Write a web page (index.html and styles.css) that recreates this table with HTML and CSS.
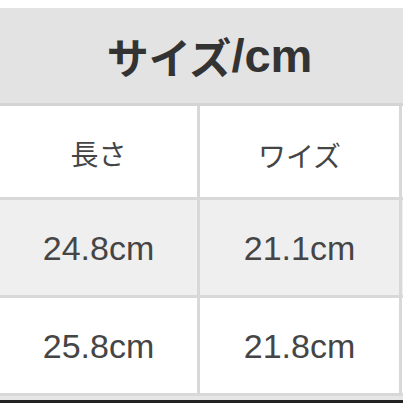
FILE: index.html
```html
<!DOCTYPE html>
<html lang="ja">
<head>
<meta charset="utf-8">
<link rel="stylesheet" href="styles.css">
</head>
<body>
<div class="sheet">
  <div class="head"><span class="jp">サイズ</span><span class="unit">/cm</span></div>
  <div class="row first">
    <div class="cell jpcell">長さ</div>
    <div class="cell jpcell">ワイズ</div>
  </div>
  <div class="row shade">
    <div class="cell num">24.8cm</div>
    <div class="cell num">21.1cm</div>
  </div>
  <div class="row">
    <div class="cell num">25.8cm</div>
    <div class="cell num">21.8cm</div>
  </div>
  <div class="foot"></div>
</div>
</body>
</html>
```

FILE: styles.css
```css
html, body {
  margin: 0;
  padding: 0;
  background: #ffffff;
}
.sheet {
  width: 403px;
  height: 403px;
  box-sizing: border-box;
  padding-top: 8px;
  display: flex;
  flex-direction: column;
  overflow: hidden;
  font-family: "Liberation Sans", "Noto Sans CJK JP", sans-serif;
}
.head {
  height: 95px;
  flex: none;
  background: #e3e3e3;
  border-bottom: 3px solid #d4d4d4;
  display: flex;
  align-items: center;
  justify-content: center;
  padding-left: 16px;
  color: #333333;
  font-weight: bold;
}
.head .jp {
  font-family: "Noto Sans CJK JP", sans-serif;
  font-size: 42px;
  line-height: 1;
}
.head .unit {
  font-family: "Liberation Sans", sans-serif;
  font-size: 47px;
  line-height: 1;
}
.row {
  flex: none;
  height: 95px;
  display: grid;
  grid-template-columns: 200px 203px;
  border-bottom: 3px solid #d8d8d8;
  background: #ffffff;
}
.row.first {
  height: 91px;
}
.row.shade {
  background: #efefef;
}
.cell {
  display: flex;
  align-items: center;
  justify-content: center;
  color: #454545;
  border-right: 3px solid #d8d8d8;
}
.cell:first-child {
  padding-top: 2px;
}
.cell:last-child {
  margin-right: 1px;
}
.jpcell {
  font-family: "Noto Sans CJK JP", sans-serif;
  font-size: 28px;
  padding-top: 6px;
}
.num {
  font-family: "Liberation Sans", sans-serif;
  font-size: 34px;
  padding-top: 2px;
}
.foot {
  flex: 1;
  background: #e6e6e6;
  border-bottom: 3px solid #222222;
}
```
